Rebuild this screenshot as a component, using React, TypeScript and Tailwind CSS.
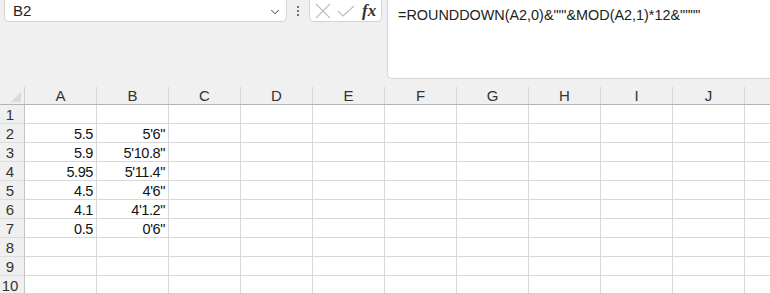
import { ChevronDown } from 'lucide-react';

const COLS = ['A', 'B', 'C', 'D', 'E', 'F', 'G', 'H', 'I', 'J'];

// values in column A and the feet/inches result in column B
const DATA: [string, string][] = [
  ['', ''],
  ['5.5', `5'6"`],
  ['5.9', `5'10.8"`],
  ['5.95', `5'11.4"`],
  ['4.5', `4'6"`],
  ['4.1', `4'1.2"`],
  ['0.5', `0'6"`],
  ['', ''],
  ['', ''],
  ['', ''],
];

const FORMULA = `=ROUNDDOWN(A2,0)&"'"&MOD(A2,1)*12&""""`;

function FormulaBar() {
  return (
    <div className="flex items-start h-[79px]">
      {/* Name box */}
      <div className="ml-[4px] w-[283px] h-[23px] mt-[-1px] bg-white border border-[#d4d4d4] rounded-b-[5px] flex items-center justify-between pl-[8px] pr-[4px]">
        <span className="text-[15px] text-[#222] leading-none">B2</span>
        <ChevronDown size={14} strokeWidth={1.6} className="text-[#333] mt-[2px]" />
      </div>

      {/* Dots */}
      <div className="w-[22px] h-[22px] flex flex-col items-center justify-center gap-[2px]">
        <span className="w-[2px] h-[2px] bg-[#444] rounded-full" />
        <span className="w-[2px] h-[2px] bg-[#444] rounded-full" />
        <span className="w-[2px] h-[2px] bg-[#444] rounded-full" />
      </div>

      {/* Cancel / Enter / Function */}
      <div className="w-[73px] h-[23px] mt-[-1px] bg-white border border-[#d4d4d4] rounded-b-[5px] flex items-center pl-[5px]">
        <svg width="16" height="16" viewBox="0 0 16 16" fill="none" stroke="#bdbdbd" strokeWidth="1.1">
          <path d="M1 1 L15 15 M15 1 L1 15" />
        </svg>
        <svg width="18" height="12" viewBox="0 0 18 12" fill="none" stroke="#bdbdbd" strokeWidth="1.1" className="ml-[6px] mt-[1px]">
          <path d="M1 6 L6 11 L17 1" />
        </svg>
        <span className="ml-[7px] text-[17px] italic font-bold text-[#333] leading-none" style={{ fontFamily: '"Liberation Serif", serif' }}>
          fx
        </span>
      </div>

      {/* Formula input */}
      <div className="ml-[5px] flex-1 h-[80px] mt-[-1px] bg-white border border-r-0 border-[#d4d4d4] rounded-bl-[5px] pl-[10px] pt-[3px]">
        <span className="text-[14.4px] text-[#222] leading-[18px] whitespace-pre">{FORMULA}</span>
      </div>
    </div>
  );
}

function Sheet() {
  return (
    <div className="flex flex-col">
      {/* Column headers */}
      <div className="flex h-[26px] border-b border-[#b4b4b4]">
        <div className="w-[25px] shrink-0 flex flex-col">
          <div className="h-[8px]" />
          <div className="flex-1 border-r border-[#d2d2d2] flex items-end justify-end pr-[3px] pb-[2px]">
            <div className="w-0 h-0 border-l-[10px] border-l-transparent border-b-[10px] border-b-[#dadada]" />
          </div>
        </div>
        {COLS.map((c) => (
          <div key={c} className="w-[72px] shrink-0 flex flex-col">
            <div className="h-[8px]" />
            <div className="flex-1 border-r border-[#d6d6d6] flex items-end justify-center text-[15px] text-[#333] leading-[15px] pb-[1px]">
              {c}
            </div>
          </div>
        ))}
        <div className="flex-1" />
      </div>

      {/* Rows */}
      {DATA.map(([a, b], i) => (
        <div key={i} className="flex h-[19px]">
          <div className="w-[25px] shrink-0 bg-[#f0f0f0] border-r border-[#c4c4c4] border-b border-b-[#dcdcdc] pr-[4px] text-center text-[15px] leading-[18px] pt-[1px] text-[#333]">
            {i + 1}
          </div>
          {COLS.map((c, j) => (
            <div
              key={c}
              className="w-[72px] shrink-0 bg-white border-r border-b border-[#d8d8d8] text-right pr-[3px] text-[14.5px] leading-[18px] pt-[1px] text-[#111] tracking-[-0.4px]"
            >
              {j === 0 ? a : j === 1 ? b : ''}
            </div>
          ))}
          <div className="flex-1 bg-white border-b border-[#d8d8d8]" />
        </div>
      ))}
    </div>
  );
}

export default function App() {
  return (
    <div
      className="w-[770px] h-[293px] overflow-hidden bg-[#f0f0f0]"
      style={{ fontFamily: '"Liberation Sans", Arial, sans-serif' }}
    >
      <FormulaBar />
      <Sheet />
    </div>
  );
}
